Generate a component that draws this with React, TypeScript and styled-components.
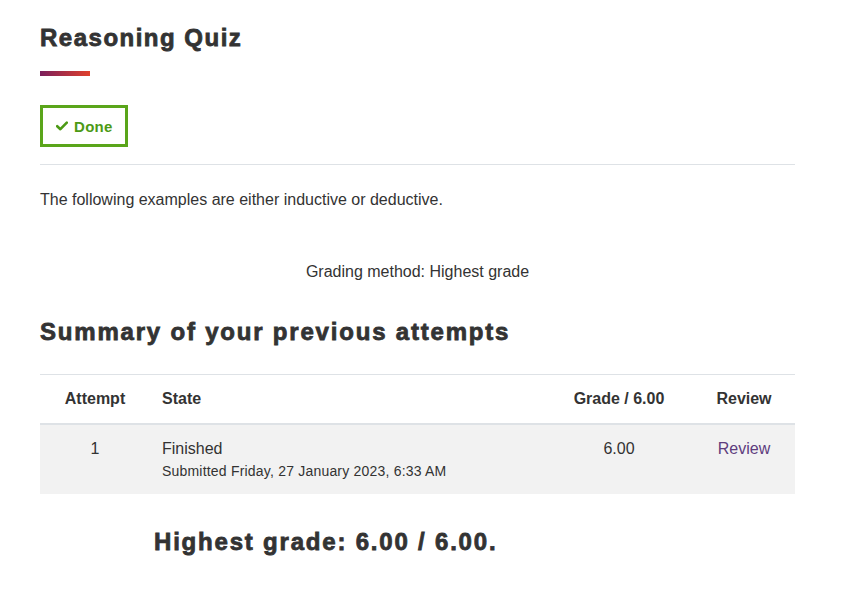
import React from "react";
import styled, { createGlobalStyle, css } from "styled-components";

const Global = createGlobalStyle`
  html, body { margin: 0; padding: 0; background: #fff; }
  body { font-family: "Liberation Sans", Arial, sans-serif; color: #1d2125; }
`;

const heading = css`
  font-size: 24px;
  line-height: 29px;
  font-weight: 700;
  letter-spacing: 1.8px;
  color: #333;
  -webkit-text-stroke: 0.8px #333;
`;

const Page = styled.main`
  width: 755px;
  margin-left: 40px;
  padding-top: 23px;
`;

const Title = styled.h1`
  margin: 0;
  ${heading}
  letter-spacing: 1.5px;
`;

const Accent = styled.div`
  width: 50px;
  height: 5px;
  margin-top: 19px;
  background: linear-gradient(90deg, #7a1f5c 0%, #e0402c 100%);
`;

const DoneBox = styled.div`
  display: inline-flex;
  align-items: center;
  gap: 6px;
  box-sizing: border-box;
  height: 42px;
  padding: 0 12px 0 13px;
  margin-top: 29px;
  border: 3px solid #5aa51a;
  color: #4c9a15;
  font-size: 15px;
  font-weight: 700;
  letter-spacing: 0.3px;
`;

const Rule = styled.hr`
  margin: 17px 0 0;
  border: 0;
  border-top: 1px solid #dee2e6;
`;

const Intro = styled.p`
  margin: 24px 0 0;
  font-size: 16px;
  line-height: 22px;
  color: #333;
`;

const Method = styled.p`
  margin: 50px 0 0;
  text-align: center;
  font-size: 16px;
  line-height: 22px;
  color: #333;
`;

const Summary = styled.h2`
  margin: 34px 0 0;
  ${heading}
`;

const Table = styled.table`
  width: 100%;
  margin-top: 28px;
  border-collapse: collapse;
  font-size: 16px;
  color: #333;
`;

const Th = styled.th<{ $align?: string; $w?: number }>`
  height: 49px;
  padding: 0 12px;
  text-align: ${(p) => p.$align || "left"};
  width: ${(p) => (p.$w ? `${p.$w}px` : "auto")};
  box-sizing: border-box;
  font-weight: 700;
  border-top: 1px solid #dee2e6;
  border-bottom: 2px solid #dee2e6;
`;

const Row = styled.tr`
  background: #f2f2f2;
`;

const Td = styled.td<{ $align?: string }>`
  padding: 14px 12px 13px;
  vertical-align: top;
  text-align: ${(p) => p.$align || "left"};
  line-height: 20px;
`;

const Sub = styled.div`
  margin-top: 2px;
  font-size: 14px;
  letter-spacing: 0.2px;
  line-height: 20px;
`;

const ReviewLink = styled.a`
  color: #5e3d7e;
  text-decoration: none;
`;

const Highest = styled.h3`
  margin: 33px 0 0 114px;
  ${heading}
`;

const Check = () => (
  <svg width="12" height="10" viewBox="0 0 12 10" aria-hidden="true">
    <path d="M1.2 5.2 L4.4 8.2 L10.8 1.6" fill="none" stroke="#4c9a15" strokeWidth="2.6" strokeLinecap="round" strokeLinejoin="round" />
  </svg>
);

export default function App() {
  return (
    <>
      <Global />
      <Page>
        <Title>Reasoning Quiz</Title>
        <Accent />
        <DoneBox>
          <Check />
          Done
        </DoneBox>
        <Rule />
        <Intro>The following examples are either inductive or deductive.</Intro>
        <Method>Grading method: Highest grade</Method>
        <Summary>Summary of your previous attempts</Summary>
        <Table>
          <thead>
            <tr>
              <Th $align="center" $w={110}>Attempt</Th>
              <Th>State</Th>
              <Th $align="center" $w={148}>Grade / 6.00</Th>
              <Th $align="center" $w={102}>Review</Th>
            </tr>
          </thead>
          <tbody>
            <Row>
              <Td $align="center">1</Td>
              <Td>
                Finished
                <Sub>Submitted Friday, 27 January 2023, 6:33 AM</Sub>
              </Td>
              <Td $align="center">6.00</Td>
              <Td $align="center">
                <ReviewLink href="#">Review</ReviewLink>
              </Td>
            </Row>
          </tbody>
        </Table>
        <Highest>Highest grade: 6.00 / 6.00.</Highest>
      </Page>
    </>
  );
}
